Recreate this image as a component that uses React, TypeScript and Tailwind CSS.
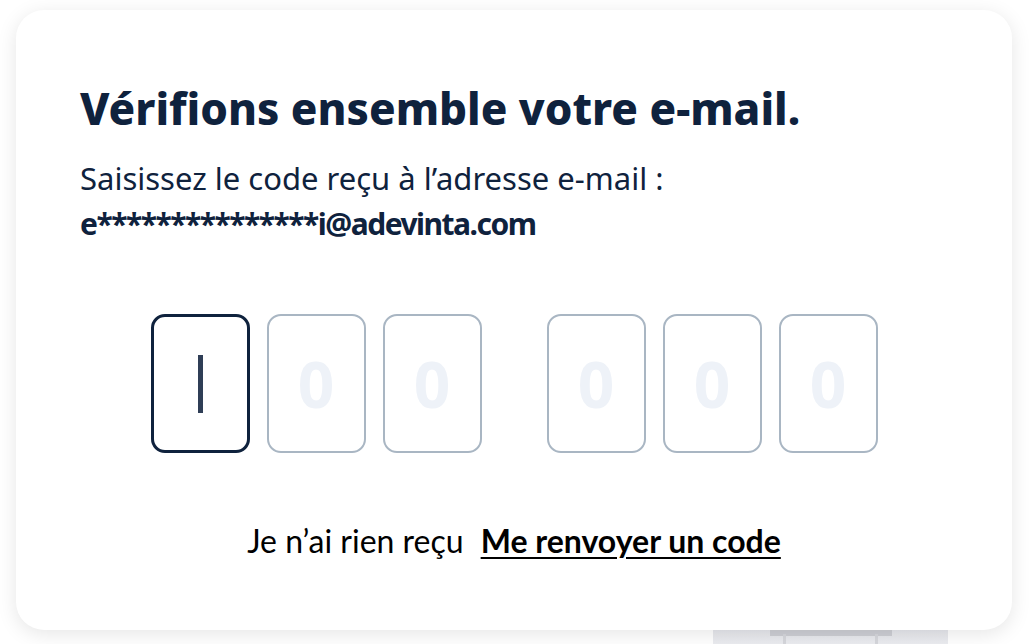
import React from "react";

const digits = [0, 1, 2];

function CodeBox({ active }: { active?: boolean }) {
  if (active) {
    return (
      <div className="flex h-[139px] w-[99px] items-center justify-center rounded-[14px] border-[3px] border-[#0f223d] bg-white">
        <div className="h-[58px] w-[5px] bg-[#2f3e56]" />
      </div>
    );
  }
  return (
    <div className="flex h-[139px] w-[99px] items-center justify-center rounded-[14px] border-2 border-[#a9b6c3] bg-white">
      <span className="text-[64px] font-bold leading-none text-[#eef2f8]">0</span>
    </div>
  );
}

export default function App() {
  return (
    <div className="relative h-[644px] w-[1030px] overflow-hidden bg-white font-['Noto_Sans',sans-serif]">
      {/* faint illustration peeking out below the card */}
      <div className="absolute left-[713px] top-[626px] h-[30px] w-[235px] bg-gradient-to-b from-[#e4e5ea] to-[#f0f1f4]">
        <div className="mx-auto mt-[4px] h-[6px] w-[122px] bg-[#cdced4]" />
        <div className="absolute left-[70px] top-[8px] h-[22px] w-[3px] bg-[#d6d7dc]" />
        <div className="absolute left-[162px] top-[8px] h-[22px] w-[3px] bg-[#d6d7dc]" />
      </div>

      <div className="relative ml-[16px] mt-[10px] flex h-[620px] w-[996px] flex-col rounded-[28px] bg-white px-[64px] pt-[74px] shadow-[0_4px_20px_rgba(0,0,0,0.10)]">
        <h1 className="text-[44px] font-extrabold leading-[48px] text-[#0f223d]">
          Vérifions ensemble votre e-mail.
        </h1>
        <p className="mt-[24px] text-[31px] leading-[44px] text-[#0f223d]">
          Saisissez le code reçu à l’adresse e-mail :
        </p>
        <p className="mt-[2px] text-[30px] font-bold leading-[44px] tracking-[-1.5px] text-[#0f223d]">
          e***************i@adevinta.com
        </p>

        <div className="mt-[68px] flex justify-center gap-[65px]">
          <div className="flex gap-[17px]">
            <CodeBox active />
            <CodeBox />
            <CodeBox />
          </div>
          <div className="flex gap-[17px]">
            {digits.map((d) => (
              <CodeBox key={d} />
            ))}
          </div>
        </div>

        <div className="mt-[68px] flex justify-center gap-[17px] font-['Lato',sans-serif] text-[32px] leading-[40px] text-black">
          <span>Je n’ai rien reçu</span>
          <a className="font-bold underline decoration-2 underline-offset-4" href="#">
            Me renvoyer un code
          </a>
        </div>
      </div>
    </div>
  );
}
